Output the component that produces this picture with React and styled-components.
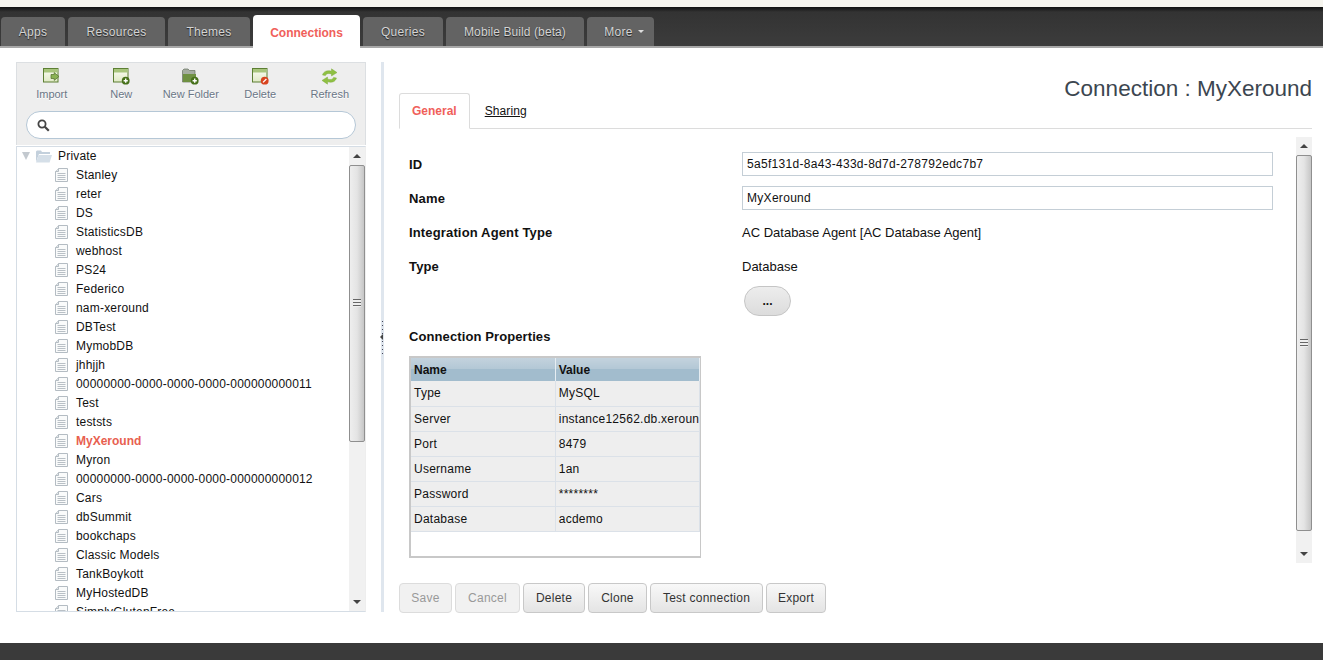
import React from "react";
import styled, { createGlobalStyle } from "styled-components";

const navTabs = [
  { label: "Apps", width: 64 },
  { label: "Resources", width: 97 },
  { label: "Themes", width: 82 },
  { label: "Connections", width: 107 },
  { label: "Queries", width: 80 },
  { label: "Mobile Build (beta)", width: 138, tight: true },
  { label: "More", width: 67, shift: 7 },
];

const connections = [
  "Stanley", "reter", "DS", "StatisticsDB", "webhost", "PS24", "Federico", "nam-xeround", "DBTest",
  "MymobDB", "jhhjjh", "00000000-0000-0000-0000-000000000011", "Test", "teststs", "MyXeround", "Myron",
  "00000000-0000-0000-0000-000000000012", "Cars", "dbSummit", "bookchaps", "Classic Models", "TankBoykott",
  "MyHostedDB", "SimplyGlutenFree",
];

const properties = [
  ["Type", "MySQL"],
  ["Server", "instance12562.db.xeround.com"],
  ["Port", "8479"],
  ["Username", "1an"],
  ["Password", "********"],
  ["Database", "acdemo"],
];

const actions = [
  { label: "Save", width: 53, disabled: true },
  { label: "Cancel", width: 65, disabled: true },
  { label: "Delete", width: 62 },
  { label: "Clone", width: 59 },
  { label: "Test connection", width: 113 },
  { label: "Export", width: 60 },
];

const PlusBadge = () => (
  <>
    <circle cx="12.7" cy="12.7" r="3.9" fill="#47711b" />
    <path d="M12.7 10.6v4.2M10.6 12.7h4.2" stroke="#fff" strokeWidth="1.4" />
  </>
);

const WindowIcon = ({ id, badge }) => (
  <svg width="17" height="17" viewBox="0 0 17 17">
    <defs>
      <linearGradient id={id} x1="0" y1="0" x2="0" y2="1">
        <stop offset="0" stopColor="#fdfdf8" />
        <stop offset="1" stopColor="#dfe9c4" />
      </linearGradient>
    </defs>
    <rect x="0.5" y="0.5" width="14.5" height="13.5" fill={`url(#${id})`} stroke="#5c7f33" />
    <rect x="1" y="1" width="13.5" height="3.5" fill="#a8c57c" />
    {badge === "import" && <path d="M8 6.5h3.2V4.6L16 8.5l-4.8 3.9v-1.9H8z" fill="#8ab254" stroke="#4f6f2a" strokeWidth="0.7" />}
    {badge === "add" && <PlusBadge />}
    {badge === "delete" && (
      <>
        <circle cx="12.7" cy="12.7" r="3.9" fill="#d8431f" />
        <path d="M11 14.4l3.4-3.4" stroke="#fff" strokeWidth="1.3" />
      </>
    )}
  </svg>
);

const FolderAddIcon = () => (
  <svg width="17" height="17" viewBox="0 0 17 17">
    <path d="M0.5 14V2.5L2 1h4l1.5 1.5H13V14z" fill="#a5ada0" stroke="#66705f" strokeWidth="0.7" />
    <path d="M1 14V6h13v8z" fill="#6f9142" />
    <PlusBadge />
  </svg>
);

const RefreshIcon = () => (
  <svg width="17" height="17" viewBox="0 0 17 17">
    <path d="M1.5 7C2.5 3.5 6 1.8 10.5 3.2V0.8L16 4.6l-5.5 3.4V6C7.5 5 5.2 5.4 4.4 7.6z" fill="#8fc043" stroke="#74a32f" strokeWidth="0.4" />
    <path d="M15.5 10C14.5 13.5 11 15.2 6.5 13.8v2.4L1 12.4 6.5 9v2c3 1 5.3.6 6.1-1.6z" fill="#8fc043" stroke="#74a32f" strokeWidth="0.4" />
  </svg>
);

const SearchIcon = () => (
  <svg width="13" height="13" viewBox="0 0 13 13">
    <circle cx="5" cy="5" r="3.6" fill="none" stroke="#444" strokeWidth="1.8" />
    <path d="M7.8 7.8L11.8 11.8" stroke="#444" strokeWidth="2.2" />
  </svg>
);

const OpenFolderIcon = () => (
  <svg width="16" height="13" viewBox="0 0 16 13">
    <path d="M0 12V1.5L1 .5h4l1 1.5h8v2H3z" fill="#c3d0dc" />
    <path d="M0 12.5L2.6 5H16l-2.4 7.5z" fill="#d5dfe8" />
  </svg>
);

const FileIcon = () => (
  <svg width="13" height="14" viewBox="0 0 13 14">
    <path d="M3.5 .5h9v13H.5V3.5z" fill="#fafbfb" stroke="#b4bcc3" />
    <path d="M.5 3.5h3v-3" fill="#e3e7ea" stroke="#b4bcc3" />
    <path d="M2.5 5.5h8M2.5 7.5h8M2.5 9.5h8M2.5 11.5h8" stroke="#b9c0c6" />
  </svg>
);

const tools = [
  { label: "Import", icon: <WindowIcon id="win-import" badge="import" /> },
  { label: "New", icon: <WindowIcon id="win-new" badge="add" /> },
  { label: "New Folder", icon: <FolderAddIcon /> },
  { label: "Delete", icon: <WindowIcon id="win-delete" badge="delete" /> },
  { label: "Refresh", icon: <RefreshIcon /> },
];

const Scrollbar = ({ thumb }) => (
  <ScrollTrack>
    <ScrollArrow $up />
    <ScrollThumb $height={thumb}>
      <Grip />
    </ScrollThumb>
    <ScrollRest />
    <ScrollArrow />
  </ScrollTrack>
);

const App = () => {
  return (
    <Page>
      <GlobalStyle />
      <TopStrip />
      <Header>
        {navTabs.map((t) => (
          <NavTab
            key={t.label}
            $width={t.width}
            $shift={t.shift}
            $tight={t.tight}
            $active={t.label === "Connections"}
          >
            {t.label}
            {t.label === "More" && <Caret />}
          </NavTab>
        ))}
      </Header>

      <Main>
        <LeftPanel>
          <Toolbar>
            <ToolRow>
              {tools.map((t) => (
                <Tool key={t.label}>
                  {t.icon}
                  <span>{t.label}</span>
                </Tool>
              ))}
            </ToolRow>
            <SearchBox>
              <SearchIcon />
            </SearchBox>
          </Toolbar>
          <TreeBox>
            <Tree>
              <RootRow>
                <Expander />
                <OpenFolderIcon />
                <span>Private</span>
              </RootRow>
              {connections.map((c, i) => (
                <TreeRow key={i} $active={c === "MyXeround"}>
                  <FileIcon />
                  <span>{c}</span>
                </TreeRow>
              ))}
            </Tree>
            <Scrollbar thumb={277} />
          </TreeBox>
        </LeftPanel>

        <Splitter>
          <SplitGrip>
            <SplitArrow />
          </SplitGrip>
        </Splitter>

        <Content>
          <ContentHead>
            <SubTabs>
              <SubTab $active>General</SubTab>
              <SubTab>Sharing</SubTab>
            </SubTabs>
            <Title>Connection : MyXeround</Title>
          </ContentHead>

          <FormArea>
            <Form>
              <FormRow>
                <Label>ID</Label>
                <Field>5a5f131d-8a43-433d-8d7d-278792edc7b7</Field>
              </FormRow>
              <FormRow>
                <Label>Name</Label>
                <Field>MyXeround</Field>
              </FormRow>
              <FormRow>
                <Label>Integration Agent Type</Label>
                <Value>AC Database Agent [AC Database Agent]</Value>
              </FormRow>
              <FormRow>
                <Label>Type</Label>
                <Value>Database</Value>
              </FormRow>
              <DotsButton>...</DotsButton>
              <SectionLabel>Connection Properties</SectionLabel>
              <PropsBox>
                <PropsTable>
                  <thead>
                    <tr>
                      <th>Name</th>
                      <th>Value</th>
                    </tr>
                  </thead>
                  <tbody>
                    {properties.map(([name, value]) => (
                      <tr key={name}>
                        <td>{name}</td>
                        <td>{value}</td>
                      </tr>
                    ))}
                  </tbody>
                </PropsTable>
              </PropsBox>
            </Form>
            <Scrollbar thumb={376} />
          </FormArea>

          <Actions>
            {actions.map((a) => (
              <ActionButton key={a.label} $width={a.width} $disabled={a.disabled}>
                {a.label}
              </ActionButton>
            ))}
          </Actions>
        </Content>
      </Main>

      <Footer />
    </Page>
  );
};

export default App;

const GlobalStyle = createGlobalStyle`
  html, body {
    margin: 0;
    padding: 0;
    background: #fff;
  }
  * {
    box-sizing: border-box;
  }
  body {
    font-family: "Liberation Sans", Arial, sans-serif;
    font-size: 12px;
    color: #111;
    overflow: hidden;
  }
`;

const Page = styled.div`
  height: 660px;
  display: flex;
  flex-direction: column;
`;

const TopStrip = styled.div`
  height: 7px;
  background: #f5f4ee;
`;

const Header = styled.div`
  height: 41px;
  padding: 8px 0 0 1px;
  display: flex;
  align-items: flex-end;
  gap: 3px;
  background: linear-gradient(#111 0, #333 5px, #3c3c3c 100%);
  border-bottom: 2px solid #a8a8a8;
`;

const NavTab = styled.div`
  width: ${(p) => p.$width}px;
  height: ${(p) => (p.$active ? "33px" : "29px")};
  margin-bottom: ${(p) => (p.$active ? "-2px" : "0")};
  padding-top: ${(p) => (p.$active ? "2px" : "0")};
  padding-left: ${(p) => p.$shift || 0}px;
  display: flex;
  align-items: center;
  justify-content: center;
  border-radius: 4px 4px 0 0;
  font-size: 12px;
  font-weight: ${(p) => (p.$active ? "bold" : "normal")};
  letter-spacing: ${(p) => (p.$active ? "0" : p.$tight ? "0.1px" : "0.3px")};
  white-space: nowrap;
  background: ${(p) => (p.$active ? "#fff" : "#636363")};
  color: ${(p) => (p.$active ? "#f0605a" : "#d4d4d4")};
  text-shadow: ${(p) => (p.$active ? "none" : "0 1px 1px #222")};
`;

const Caret = styled.span`
  margin-left: 5px;
  border-left: 3px solid transparent;
  border-right: 3px solid transparent;
  border-top: 3px solid #ddd;
`;

const Main = styled.div`
  height: 550px;
  margin-top: 14px;
  padding-left: 16px;
  padding-right: 11px;
  display: flex;
`;

const LeftPanel = styled.div`
  width: 350px;
  display: flex;
  flex-direction: column;
  gap: 1px;
`;

const Toolbar = styled.div`
  height: 83px;
  padding-top: 5px;
  background: #eee;
  border: 1px solid #dcdfe2;
  border-bottom: 0;
`;

const ToolRow = styled.div`
  display: flex;
`;

const Tool = styled.div`
  width: 69.5px;
  height: 36px;
  flex: none;
  display: flex;
  flex-direction: column;
  align-items: center;
  gap: 3px;
  font-size: 11px;
  white-space: nowrap;
  color: #6a7686;
  text-shadow: 0 1px 0 #fff;
  svg {
    flex: none;
  }
`;

const SearchBox = styled.div`
  width: 330px;
  height: 28px;
  margin: 7px 0 0 9px;
  padding-left: 10px;
  display: flex;
  align-items: center;
  background: #fff;
  border: 1px solid #b5c7d6;
  border-radius: 14px;
`;

const TreeBox = styled.div`
  height: 467px;
  display: flex;
  overflow: hidden;
  border: 1px solid #d5dde5;
  border-right-color: #eee;
`;

const Tree = styled.div`
  flex: 1;
  min-width: 0;
  overflow: hidden;
`;

const RootRow = styled.div`
  height: 19px;
  padding-left: 5px;
  display: flex;
  align-items: center;
  gap: 6px;
  letter-spacing: 0.2px;
`;

const Expander = styled.span`
  border-left: 4px solid transparent;
  border-right: 4px solid transparent;
  border-top: 8px solid #c3c9cf;
`;

const TreeRow = styled.div`
  height: 19px;
  padding-left: 38px;
  display: flex;
  align-items: center;
  gap: 8px;
  white-space: nowrap;
  letter-spacing: ${(p) => (p.$active ? "0" : "0.2px")};
  color: ${(p) => (p.$active ? "#e8604f" : "#111")};
  font-weight: ${(p) => (p.$active ? "bold" : "normal")};
  svg {
    flex: none;
  }
`;

const ScrollTrack = styled.div`
  width: 16px;
  flex: none;
  display: flex;
  flex-direction: column;
  background: #f1f1f1;
`;

const ScrollArrow = styled.div`
  height: 18px;
  flex: none;
  display: flex;
  align-items: center;
  justify-content: center;
  &::before {
    content: "";
    border-left: 4px solid transparent;
    border-right: 4px solid transparent;
    ${(p) => (p.$up ? "border-bottom: 4px solid #444;" : "border-top: 4px solid #444;")}
  }
`;

const ScrollThumb = styled.div`
  height: ${(p) => p.$height}px;
  flex: none;
  display: flex;
  align-items: center;
  justify-content: center;
  background: linear-gradient(90deg, #eee, #e4e4e4 50%, #c6c6c6);
  border: 1px solid #8f8f8f;
  border-radius: 2px;
`;

const Grip = styled.div`
  width: 8px;
  height: 8px;
  background: repeating-linear-gradient(#666 0 1px, #eee 1px 3px);
`;

const ScrollRest = styled.div`
  flex: 1;
`;

const Splitter = styled.div`
  position: relative;
  width: 3px;
  margin-left: 15px;
  flex: none;
  background: #dfe6ee;
`;

const SplitGrip = styled.div`
  position: absolute;
  left: 1px;
  top: 259px;
  width: 1px;
  height: 33px;
  background: repeating-linear-gradient(#445 0 1px, transparent 1px 4px);
`;

const SplitArrow = styled.span`
  position: absolute;
  left: -2px;
  top: 13px;
  border-top: 3px solid transparent;
  border-bottom: 3px solid transparent;
  border-right: 3px solid #444;
`;

const Content = styled.div`
  flex: 1;
  min-width: 0;
  margin-left: 15px;
  display: flex;
  flex-direction: column;
`;

const ContentHead = styled.div`
  height: 67px;
  flex: none;
  display: flex;
  justify-content: space-between;
  align-items: flex-end;
  border-bottom: 1px solid #dcdcdc;
`;

const Title = styled.div`
  align-self: flex-start;
  margin-top: 13px;
  font-size: 22.5px;
  line-height: 28px;
  color: #3c4650;
`;

const SubTabs = styled.div`
  display: flex;
`;

const SubTab = styled.div`
  height: 36px;
  margin-bottom: -1px;
  padding: 0 ${(p) => (p.$active ? "12px" : "15px")};
  display: flex;
  align-items: center;
  font-size: 12px;
  ${(p) =>
    p.$active
      ? `
    font-weight: bold;
    color: #f0605a;
    background: #fff;
    border: 1px solid #dcdcdc;
    border-bottom: 1px solid #fff;
    border-radius: 3px 3px 0 0;
  `
      : `
    color: #111;
    letter-spacing: 0.1px;
    text-decoration: underline;
  `}
`;

const FormArea = styled.div`
  height: 426px;
  margin-top: 8px;
  flex: none;
  display: flex;
`;

const Form = styled.div`
  flex: 1;
  min-width: 0;
  padding: 14px 0 0 10px;
`;

const FormRow = styled.div`
  height: 34px;
  display: flex;
  align-items: center;
  padding-bottom: 8px;
`;

const Label = styled.div`
  width: 333px;
  flex: none;
  font-size: 13px;
  font-weight: bold;
  letter-spacing: 0.15px;
`;

const Field = styled.div`
  width: 531px;
  height: 24px;
  padding-left: 4px;
  display: flex;
  align-items: center;
  letter-spacing: 0.3px;
  border: 1px solid #c4ced6;
`;

const Value = styled.div`
  font-size: 13px;
`;

const DotsButton = styled.div`
  width: 47px;
  height: 30px;
  margin: -1px 0 0 335px;
  display: flex;
  align-items: center;
  justify-content: center;
  font-weight: bold;
  background: linear-gradient(#ededed, #dcdcdc);
  border: 1px solid #c5c5c5;
  border-radius: 15px;
`;

const SectionLabel = styled.div`
  margin-top: 13px;
  height: 16px;
  font-size: 13px;
  line-height: 16px;
  font-weight: bold;
  letter-spacing: 0.1px;
`;

const PropsBox = styled.div`
  width: 292px;
  height: 202px;
  margin-top: 11px;
  background: #fff;
  border: 2px solid #c8c8c8;
  border-right-width: 1px;
  overflow: hidden;
`;

const PropsTable = styled.table`
  width: 100%;
  table-layout: fixed;
  border-collapse: collapse;
  th {
    height: 23px;
    padding: 0 3px;
    text-align: left;
    font-size: 12px;
    background: linear-gradient(#c3d2dd 0, #b2c7d5 50%, #a2bccd 50%, #a2bccd 100%);
    border-right: 1px solid #e6edf2;
  }
  td {
    height: 25px;
    padding: 0 3px;
    white-space: nowrap;
    overflow: hidden;
    letter-spacing: 0.25px;
    background: #eee;
    border-bottom: 1px solid #dbe1e8;
    border-right: 1px solid #dbe1e8;
  }
`;

const Actions = styled.div`
  margin-top: 20px;
  display: flex;
  gap: 3px;
`;

const ActionButton = styled.div`
  width: ${(p) => p.$width}px;
  height: 30px;
  display: flex;
  align-items: center;
  justify-content: center;
  font-size: 12px;
  letter-spacing: 0.25px;
  color: ${(p) => (p.$disabled ? "#999" : "#333")};
  background: ${(p) => (p.$disabled ? "#f1f1f1" : "linear-gradient(#f8f8f8, #e4e4e4)")};
  border: 1px solid ${(p) => (p.$disabled ? "#dcdcdc" : "#c8c8c8")};
  border-radius: 4px;
`;

const Footer = styled.div`
  height: 17px;
  margin-top: 31px;
  background: #3a3a3a;
`;
